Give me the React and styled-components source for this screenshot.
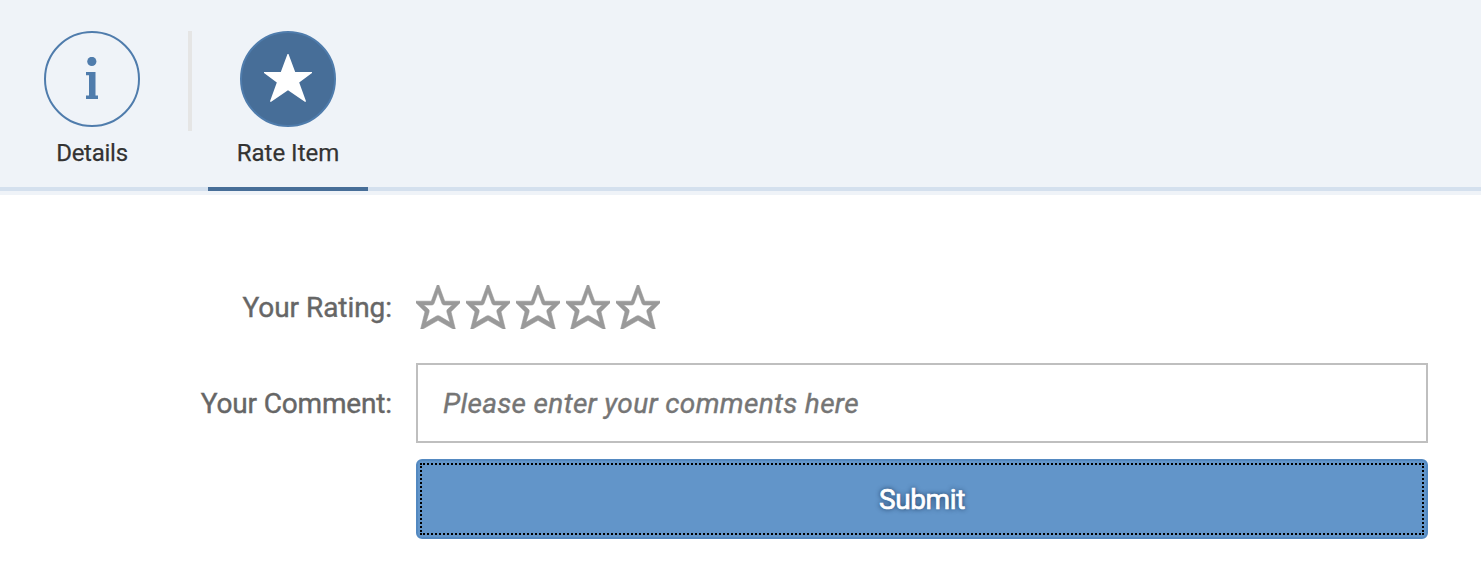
import React from "react";
import styled, { createGlobalStyle } from "styled-components";

const GlobalStyle = createGlobalStyle`
  * { box-sizing: border-box; }
  body {
    margin: 0;
    background: #fff;
    font-family: Roboto, "Liberation Sans", sans-serif;
  }
`;

const Page = styled.main`
  width: 100%;
  height: 570px;
  overflow: hidden;
`;

const TabBar = styled.nav`
  display: flex;
  height: 195px;
  padding: 31px 0 0 12px;
  background: linear-gradient(#eff3f8 187px, #d4e0ee 187px, #d4e0ee 191px, #eff3f8 191px);
`;

const Tab = styled.a`
  display: flex;
  flex-direction: column;
  align-items: center;
  width: 160px;
  height: 160px;
  border-bottom: 4px solid ${(p) => (p.$active ? "#476e98" : "transparent")};
`;

const Separator = styled.div`
  width: 4px;
  height: 100px;
  margin: 0 16px;
  background: #e5e5e5;
`;

const IconCircle = styled.span`
  display: flex;
  align-items: center;
  justify-content: center;
  width: 96px;
  height: 96px;
  border: 2px solid #4f7cac;
  border-radius: 50%;
  color: ${(p) => (p.$active ? "#fff" : "#4f7cac")};
  background: ${(p) => (p.$active ? "#476e98" : "transparent")};
`;

const TabLabel = styled.span`
  margin-top: 10px;
  font-size: 24px;
  line-height: 32px;
  letter-spacing: ${(p) => p.$spacing};
  color: #333;
  white-space: nowrap;
  -webkit-text-stroke: 0.25px #333;
  text-shadow: 0 0 2px #fff;
`;

const Form = styled.form`
  display: grid;
  grid-template-columns: 392px 1012px;
  column-gap: 24px;
  grid-template-rows: 80px 80px 80px;
  row-gap: 16px;
  padding-top: 72px;
`;

const Label = styled.label`
  align-self: center;
  justify-self: end;
  padding-top: 2px;
  font-size: 28px;
  line-height: 36px;
  letter-spacing: ${(p) => p.$spacing};
  -webkit-text-stroke: 0.4px #666;
  color: #666;
  white-space: nowrap;
`;

const Rating = styled.div`
  display: flex;
  align-items: center;
  gap: 6px;
`;

const Input = styled.input`
  height: 80px;
  padding: 0 25px;
  border: 2px solid #bfbfbf;
  border-radius: 0;
  outline: none;
  font: 28px Roboto, "Liberation Sans", sans-serif;
  &::placeholder {
    color: #757575;
    opacity: 1;
    font-style: italic;
    letter-spacing: 0.34px;
    -webkit-text-stroke: 0.4px #757575;
  }
`;

const SubmitButton = styled.button`
  grid-column: 2;
  display: flex;
  padding: 2px;
  border: 2px solid #5389c1;
  border-radius: 6px;
  background: #6295c9;
  color: #fff;
  font: 28px Roboto, "Liberation Sans", sans-serif;
  letter-spacing: -0.35px;
  -webkit-text-stroke: 0.7px #fff;
  text-shadow: 0 0 5px #10294a;
`;

const FocusFrame = styled.span`
  display: flex;
  flex: 1;
  align-self: stretch;
  align-items: center;
  justify-content: center;
  border: 2px dotted #000;
`;

const InfoIcon = () => (
  <svg width="14" height="44" viewBox="0 0 14 44" fill="currentColor">
    <circle cx="6.8" cy="4.4" r="4.6" />
    <path d="M1 15h9.5v23.6H13V42H1v-3.4h3V18.2H1z" />
  </svg>
);

const StarIcon = () => (
  <svg width="48" height="50" viewBox="0 -1 48 50" fill="currentColor">
    <path d="M23.5-1h1L31.2 17H48v1L35.2 27.5 42 46.3 41.2 47 24 35.2 6.8 47 6 46.3 12.8 27.5 0 18v-1h16.8z" />
  </svg>
);

const EmptyStar = () => (
  <svg width="44" height="44" viewBox="0 0 44 44" fill="#999" fillRule="evenodd" stroke="#999" strokeWidth="0.6">
    <path d="M21.2 0h1.6L28.7 16.2H44v1.6L35 26.7 39.3 44H37.2L22 35.3 6.8 44H4.7L9 26.7 0 17.8v-1.6h15.3z M22 7.5l-4 11Q17.4 20 15.6 20H7.6l4.6 4q1.4 1.2.9 3L10 37.3l10.6-6.3Q22 30.3 23.4 31L34 37.3 30.9 27q-.5-1.8.9-3l4.6-4h-8Q26.6 20 26 18.5z" />
  </svg>
);

export default function App() {
  return (
    <Page>
      <GlobalStyle />
      <TabBar>
        <Tab>
          <IconCircle><InfoIcon /></IconCircle>
          <TabLabel $spacing="-0.25px">Details</TabLabel>
        </Tab>
        <Separator />
        <Tab $active>
          <IconCircle $active><StarIcon /></IconCircle>
          <TabLabel $spacing="0">Rate Item</TabLabel>
        </Tab>
      </TabBar>
      <Form onSubmit={(e) => e.preventDefault()}>
        <Label $spacing="-0.05px">Your Rating:</Label>
        <Rating>
          {[1, 2, 3, 4, 5].map((n) => <EmptyStar key={n} />)}
        </Rating>
        <Label htmlFor="comment" $spacing="-0.15px">Your Comment:</Label>
        <Input id="comment" placeholder="Please enter your comments here" />
        <SubmitButton type="submit"><FocusFrame>Submit</FocusFrame></SubmitButton>
      </Form>
    </Page>
  );
}
